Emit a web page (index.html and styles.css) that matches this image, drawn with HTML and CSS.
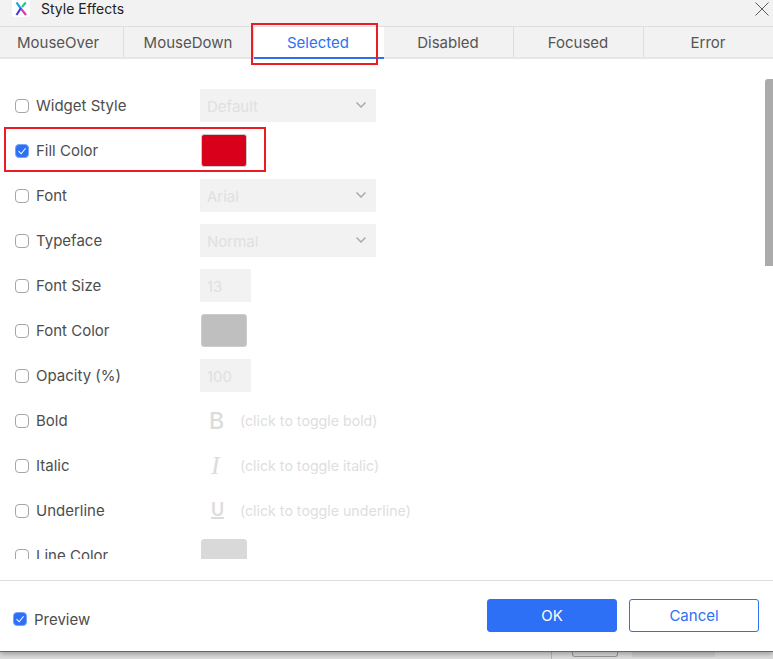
FILE: index.html
```html
<!DOCTYPE html>
<html lang="en">
<head>
    <meta charset="UTF-8">
    <title>Style Effects</title>
    <link rel="stylesheet" href="styles.css">
</head>
<body>
    <div class="dialog">
        <div class="titlebar">
            <div class="logo">
                <svg width="18" height="17" viewBox="0 0 18 17">
                    <path d="M4.5 2.5 L9.2 8.8" stroke="#17a8e0" stroke-width="2.2" fill="none"/>
                    <path d="M9 8 L4.5 15" stroke="#3d3fd6" stroke-width="2.2" fill="none"/>
                    <path d="M9.2 8.8 L14 15" stroke="#d93aa8" stroke-width="2.2" fill="none"/>
                    <path d="M10 7 L13.8 2.5" stroke="#2cc48c" stroke-width="2.2" fill="none"/>
                </svg>
            </div>
            <span class="title">Style Effects</span>
            <svg class="close" width="14" height="14" viewBox="0 0 14 14">
                <path d="M0.5 0.5 L13.5 13.5 M13.5 0.5 L0.5 13.5" stroke="#333" stroke-width="0.8" fill="none"/>
            </svg>
        </div>

        <div class="tabs">
            <div class="tab tab-first">MouseOver</div>
            <div class="tab">MouseDown</div>
            <div class="tab active">Selected</div>
            <div class="tab">Disabled</div>
            <div class="tab">Focused</div>
            <div class="tab">Error</div>
        </div>

        <div class="content">
            <div class="rows">
                <div class="row">
                    <span class="check"></span><span class="label">Widget Style</span>
                    <div class="select"><span>Default</span><svg width="10" height="6" viewBox="0 0 10 6"><path d="M0.5 0.5 L5 5 L9.5 0.5" stroke="#aaa" stroke-width="1.5" fill="none"/></svg></div>
                </div>
                <div class="row">
                    <span class="check checked"><svg width="14" height="14" viewBox="0 0 14 14"><path d="M3 7.2 L6 10.2 L11.2 3.8" stroke="#fff" stroke-width="1.2" fill="none"/></svg></span><span class="label">Fill Color</span>
                    <div class="swatch swatch-red"></div>
                </div>
                <div class="row">
                    <span class="check"></span><span class="label">Font</span>
                    <div class="select"><span>Arial</span><svg width="10" height="6" viewBox="0 0 10 6"><path d="M0.5 0.5 L5 5 L9.5 0.5" stroke="#aaa" stroke-width="1.5" fill="none"/></svg></div>
                </div>
                <div class="row">
                    <span class="check"></span><span class="label">Typeface</span>
                    <div class="select"><span>Normal</span><svg width="10" height="6" viewBox="0 0 10 6"><path d="M0.5 0.5 L5 5 L9.5 0.5" stroke="#aaa" stroke-width="1.5" fill="none"/></svg></div>
                </div>
                <div class="row">
                    <span class="check"></span><span class="label">Font Size</span>
                    <div class="num">13</div>
                </div>
                <div class="row">
                    <span class="check"></span><span class="label">Font Color</span>
                    <div class="swatch swatch-grey"></div>
                </div>
                <div class="row">
                    <span class="check"></span><span class="label">Opacity (%)</span>
                    <div class="num">100</div>
                </div>
                <div class="row">
                    <span class="check"></span><span class="label">Bold</span>
                    <span class="glyph"><span class="glyph-bold">B</span></span><span class="hint">(click to toggle bold)</span>
                </div>
                <div class="row">
                    <span class="check"></span><span class="label">Italic</span>
                    <span class="glyph"><span class="glyph-italic">I</span></span><span class="hint">(click to toggle italic)</span>
                </div>
                <div class="row">
                    <span class="check"></span><span class="label">Underline</span>
                    <span class="glyph"><span class="glyph-under">U</span></span><span class="hint">(click to toggle underline)</span>
                </div>
                <div class="row">
                    <span class="check"></span><span class="label">Line Color</span>
                    <div class="swatch swatch-light"></div>
                </div>
            </div>
            <div class="scrollbar"></div>
        </div>

        <div class="footer">
            <label class="preview">
                <span class="check checked"><svg width="14" height="14" viewBox="0 0 14 14"><path d="M3 7.2 L6 10.2 L11.2 3.8" stroke="#fff" stroke-width="1.2" fill="none"/></svg></span>
                <span class="label">Preview</span>
            </label>
            <div class="buttons">
                <button class="btn btn-ok">OK</button>
                <button class="btn btn-cancel">Cancel</button>
            </div>
        </div>
    </div>

    <div class="behind">
        <div class="behind-line"></div>
        <div class="behind-box"></div>
        <div class="behind-bar"></div>
    </div>

    <div class="mark mark-tab"></div>
    <div class="mark mark-fill"></div>
</body>
</html>
```

FILE: styles.css
```css
html, body {
    margin: 0;
    padding: 0;
    height: 659px;
    overflow: hidden;
    background: #dcdcdc;
}

body {
    font-family: 'Inter', 'Liberation Sans', sans-serif;
    font-size: 15px;
    color: #4d4d4d;
    position: relative;
}

.dialog {
    height: 651px;
    display: flex;
    flex-direction: column;
    background: #fff;
    border-bottom: 1px solid #1f78d1;
    box-shadow: 0 2px 5px rgba(0, 0, 0, 0.3);
    position: relative;
}

/* title bar */
.titlebar {
    height: 26px;
    display: flex;
    align-items: flex-start;
    background: #f2f2f2;
    border-bottom: 1px solid #dedede;
    flex-shrink: 0;
}

.logo {
    width: 18px;
    height: 17px;
    margin-left: 12px;
    background: #fff;
    border-radius: 0 0 3px 3px;
}

.title {
    margin-left: 11px;
    font-size: 14px;
    line-height: 17px;
    color: #222;
}

.close {
    margin-left: auto;
    margin-right: 4px;
    margin-top: 2px;
}

/* tabs */
.tabs {
    height: 30px;
    display: flex;
    background: #f2f2f2;
    border-bottom: 2px solid #e6e6e6;
    flex-shrink: 0;
}

.tab {
    width: 130px;
    flex-shrink: 0;
    box-sizing: border-box;
    padding-right: 1px;
    text-align: center;
    line-height: 31px;
    border-right: 1px solid #dedede;
    color: #555;
}

.tab-first {
    width: 124px;
    text-align: left;
    padding-left: 17px;
}

.tab.active {
    background: #fff;
    color: #2e70f5;
    border-right: none;
    padding-right: 2px;
    height: 32px;
    border-bottom: 2px solid #2e70f5;
}

/* option rows */
.content {
    height: 500px;
    overflow: hidden;
    position: relative;
    flex-shrink: 0;
}

.rows {
    padding-top: 24px;
}

.row {
    height: 45px;
    display: flex;
    align-items: center;
    padding-left: 15px;
}

.check {
    width: 14px;
    height: 14px;
    box-sizing: border-box;
    border: 1.5px solid #a6a6a6;
    border-radius: 4px;
    display: inline-flex;
    align-items: center;
    justify-content: center;
    flex-shrink: 0;
}

.check.checked {
    background: #2e70f5;
    border-color: #79a3f7;
}

.label {
    margin-left: 7px;
    width: 164px;
    flex-shrink: 0;
}

.select {
    width: 176px;
    height: 33px;
    box-sizing: border-box;
    padding: 1px 10px 0 7px;
    background: #f2f2f2;
    color: #e0e0e0;
    display: flex;
    align-items: center;
    justify-content: space-between;
}

.select svg {
    margin-top: -2px;
}

.num {
    width: 51px;
    height: 33px;
    box-sizing: border-box;
    padding-left: 7px;
    line-height: 35px;
    background: #f2f2f2;
    color: #e0e0e0;
}

.swatch {
    width: 46px;
    height: 33px;
    box-sizing: border-box;
    border-radius: 3px;
    border: 1px solid #ccc;
    margin-left: 1px;
}

.swatch-red {
    background: #d9001b;
}

.swatch-grey {
    background: #bfbfbf;
}

.swatch-light {
    background: #d9d9d9;
    border-color: #d9d9d9;
}

.glyph {
    width: 40px;
    padding-left: 9px;
    box-sizing: border-box;
    color: #dcdcdc;
    flex-shrink: 0;
    display: flex;
    align-items: center;
}

.glyph-bold {
    font-size: 23px;
    font-weight: 500;
    line-height: 24px;
}

.glyph-italic {
    font-family: 'Liberation Serif', serif;
    font-style: italic;
    font-size: 26px;
    line-height: 24px;
    margin-left: 2px;
}

.glyph-under {
    font-size: 18px;
    font-weight: 600;
    line-height: 15px;
    border-bottom: 2px solid #dcdcdc;
    margin-left: 2px;
}

.hint {
    font-size: 14.2px;
    color: #dedede;
}

.scrollbar {
    position: absolute;
    top: 20px;
    right: 0;
    width: 8px;
    height: 187px;
    background: #ababab;
    border-radius: 3px 0 0 0;
}

/* footer */
.footer {
    flex: 1;
    margin-top: 21px;
    border-top: 1px solid #dedede;
    display: flex;
    align-items: center;
    justify-content: space-between;
    padding: 0 14px 0 13px;
}

.preview {
    display: flex;
    align-items: center;
    margin-top: 6px;
}

.preview .label {
    margin-left: 7px;
    width: auto;
}

.buttons {
    display: flex;
    gap: 12px;
    margin-bottom: 1px;
}

.btn {
    width: 130px;
    height: 33px;
    border-radius: 3px;
    font-family: inherit;
    font-size: 15px;
    box-sizing: border-box;
}

.btn-ok {
    background: #2e70f5;
    border: 1px solid #2e70f5;
    color: #fff;
}

.btn-cancel {
    background: #fff;
    border: 1px solid #2e70f5;
    color: #2e70f5;
}

/* what shows under the dialog */
.behind {
    height: 7px;
    display: flex;
}

.behind-line {
    width: 1px;
    height: 7px;
    background: #b5b5b5;
    margin-left: 551px;
}

.behind-box {
    width: 46px;
    height: 5px;
    box-sizing: border-box;
    border: 1px solid #999;
    border-top: none;
    border-radius: 0 0 3px 3px;
    margin-left: 20px;
}

.behind-bar {
    width: 83px;
    height: 5px;
    background: #cfcfcf;
    margin-left: 14px;
}

/* red annotation boxes */
.mark {
    position: absolute;
    box-sizing: border-box;
    border: 2px solid #ed1c24;
}

.mark-tab {
    left: 251px;
    top: 23px;
    width: 127px;
    height: 42px;
}

.mark-fill {
    left: 4px;
    top: 127px;
    width: 262px;
    height: 45px;
}
```
